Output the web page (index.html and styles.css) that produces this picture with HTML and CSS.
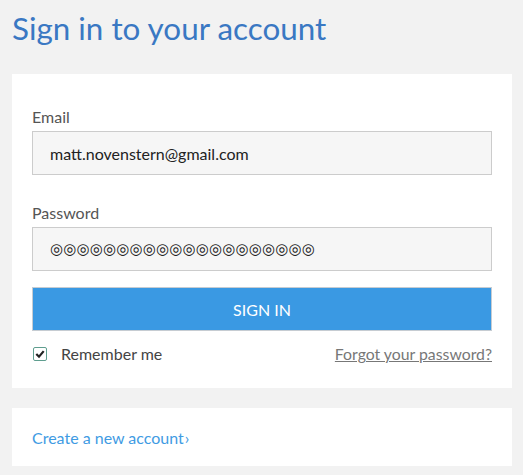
FILE: index.html
```html
<!DOCTYPE html>
<html lang="en">
<head>
  <meta charset="UTF-8" />
  <title>Sign in</title>
  <meta name="viewport" content="width=device-width, initial-scale=1" />
  <link rel="stylesheet" href="styles.css">
</head>
<body>
  <h1>Sign in to your account</h1>

  <form class="card login" id="form">
    <label for="email">Email</label>
    <input type="text" id="email" value="matt.novenstern@gmail.com" />

    <label for="password">Password</label>
    <input type="text" id="password" class="pass" value="◎◎◎◎◎◎◎◎◎◎◎◎◎◎◎◎◎◎◎◎" />

    <button type="submit">SIGN IN</button>

    <div class="row">
      <label class="remember">
        <span class="check">
          <svg width="10" height="10" viewBox="0 0 10 10"><path d="M1.3 5 L4 7.7 L8.7 2.1" fill="none" stroke="#222" stroke-width="2.2"/></svg>
        </span>
        Remember me
      </label>
      <a href="#" class="forgot">Forgot your password?</a>
    </div>
  </form>

  <div class="card signup">
    <a href="#">Create a new account<span class="arrow">›</span></a>
  </div>
</body>
</html>
```

FILE: styles.css
```css
body {
  margin: 0;
  padding: 0 12px;
  background: #f2f2f2;
  font-family: Lato, 'Open Sans', sans-serif;
  color: #444;
}
h1 {
  margin: 0;
  padding-top: 8px;
  height: 74px;
  box-sizing: border-box;
  font-size: 31.4px;
  font-weight: 400;
  color: #3a78c3;
  line-height: 40px;
}
.card {
  background: white;
  width: 500px;
  box-sizing: border-box;
  padding: 0 20px;
}
.login {
  padding-top: 34px;
  height: 314px;
}
.login label {
  display: block;
  font-size: 16px;
  color: #555;
  line-height: 18px;
  margin-bottom: 5px;
}
.login input {
  display: block;
  width: 460px;
  height: 44px;
  box-sizing: border-box;
  border: 1px solid #cccccc;
  background: #f6f6f6;
  padding: 0 17px;
  font-family: Lato, sans-serif;
  font-size: 16px;
  color: #222;
  margin-bottom: 29px;
}
.login input.pass {
  font-family: 'DejaVu Sans', sans-serif;
  font-size: 15.2px;
  margin-bottom: 16px;
}
button {
  display: block;
  width: 460px;
  height: 44px;
  background: #3a99e3;
  border: 1px solid #c6ccd2;
  color: white;
  font-family: Lato, sans-serif;
  font-size: 16px;
  cursor: pointer;
}
.row {
  display: flex;
  justify-content: space-between;
  align-items: center;
  margin-top: 13px;
}
.login .remember {
  display: flex;
  align-items: center;
  gap: 14px;
  margin: 0;
  color: #444;
}
.check {
  width: 12px;
  height: 12px;
  border: 1px solid #5f9e8f;
  border-radius: 2px;
  margin-left: 1px;
  display: flex;
  align-items: center;
  justify-content: center;
  background: #fff;
}
.forgot {
  font-size: 15.8px;
  color: #777;
  text-decoration: underline;
}
.signup {
  margin-top: 20px;
  height: 58px;
  display: flex;
  align-items: center;
}
.signup a {
  color: #3f9be3;
  font-size: 16px;
  text-decoration: none;
}
.arrow {
  margin-left: 1px;
}
```
